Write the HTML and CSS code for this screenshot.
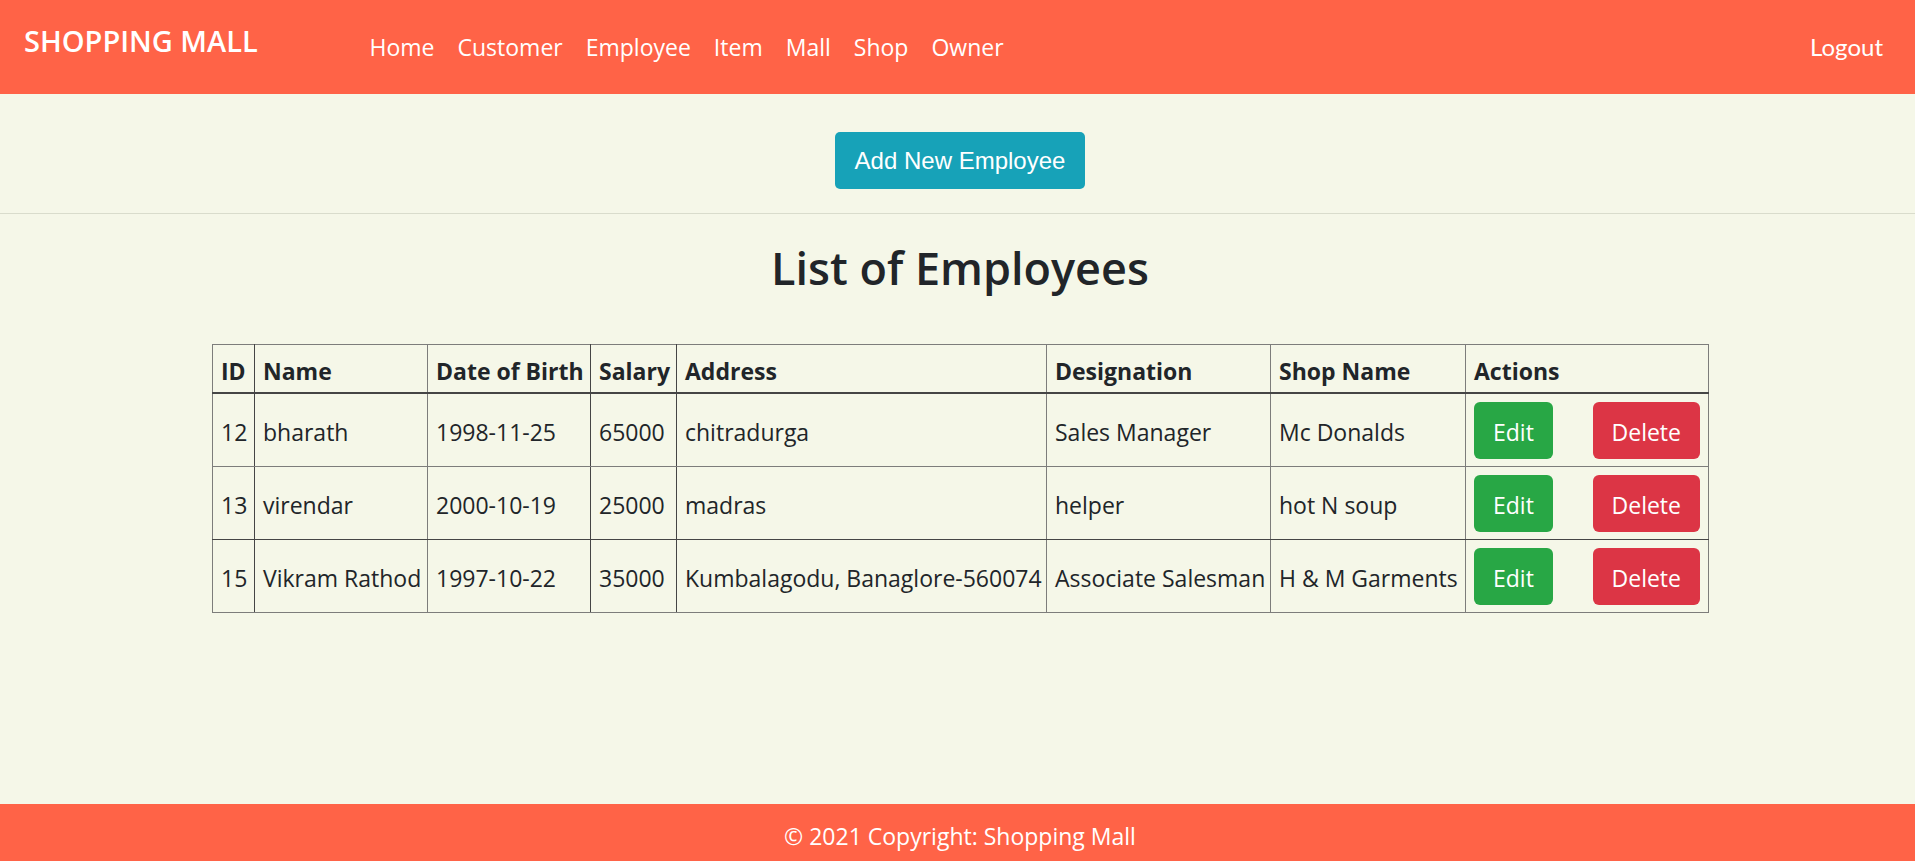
FILE: index.html
```html
<!DOCTYPE html>
<html lang="en">
<head>
<meta charset="utf-8">
<title>Shopping Mall - Employees</title>
<link rel="stylesheet" href="styles.css">
</head>
<body>
<header class="navbar">
  <a class="brand" href="#">SHOPPING MALL</a>
  <nav class="nav-links">
    <a href="#">Home</a>
    <a href="#">Customer</a>
    <a href="#">Employee</a>
    <a href="#">Item</a>
    <a href="#">Mall</a>
    <a href="#">Shop</a>
    <a href="#">Owner</a>
  </nav>
  <a class="logout" href="#">Logout</a>
</header>
<main class="content">
  <div class="toolbar">
    <button class="btn-add" type="button">Add New Employee</button>
  </div>
  <hr class="divider">
  <h2 class="page-title">List of Employees</h2>
  <table class="emp-table">
    <colgroup>
      <col class="c-id"><col class="c-name"><col class="c-dob"><col class="c-sal"><col class="c-addr"><col class="c-des"><col class="c-shop"><col class="c-act">
    </colgroup>
    <thead>
      <tr>
        <th class="dk">ID</th><th>Name</th><th class="dk">Date of Birth</th><th class="dk">Salary</th><th>Address</th><th>Designation</th><th>Shop Name</th><th>Actions</th>
      </tr>
    </thead>
    <tbody>
      <tr>
        <td class="dk">12</td><td>bharath</td><td class="dk">1998-11-25</td><td class="dk">65000</td><td>chitradurga</td><td>Sales Manager</td><td>Mc Donalds</td>
        <td><div class="actions"><button class="btn btn-edit" type="button">Edit</button><button class="btn btn-delete" type="button">Delete</button></div></td>
      </tr>
      <tr class="row-dk">
        <td class="dk">13</td><td>virendar</td><td class="dk">2000-10-19</td><td class="dk">25000</td><td>madras</td><td>helper</td><td>hot N soup</td>
        <td><div class="actions"><button class="btn btn-edit" type="button">Edit</button><button class="btn btn-delete" type="button">Delete</button></div></td>
      </tr>
      <tr>
        <td class="dk">15</td><td>Vikram Rathod</td><td class="dk">1997-10-22</td><td class="dk">35000</td><td>Kumbalagodu, Banaglore-560074</td><td>Associate Salesman</td><td>H &amp; M Garments</td>
        <td><div class="actions"><button class="btn btn-edit" type="button">Edit</button><button class="btn btn-delete" type="button">Delete</button></div></td>
      </tr>
    </tbody>
  </table>
</main>
<footer class="footer">© 2021 Copyright: Shopping Mall</footer>
</body>
</html>
```

FILE: styles.css
```css
html, body {
  margin: 0;
  padding: 0;
}

body {
  font-family: "Open Sans", "Noto Sans", sans-serif;
  background: #f5f7e8;
  color: #212529;
  min-height: 100vh;
  display: flex;
  flex-direction: column;
}

/* ---------- Navbar ---------- */
.navbar {
  height: 94px;
  box-sizing: border-box;
  background: #ff6347;
  display: flex;
  align-items: center;
  padding: 0 32px 0 24px;
}

.brand {
  flex: 0 0 334px;
  font-size: 29px;
  font-weight: 600;
  line-height: 1.5;
  color: #fff;
  text-decoration: none;
  margin-bottom: 12px;
}

.nav-links {
  display: flex;
}

.nav-links a {
  font-size: 23px;
  line-height: 1.5;
  color: #fff;
  text-decoration: none;
  padding: 0 11.5px;
}

.logout {
  margin-left: auto;
  font-family: Lato, "Open Sans", sans-serif;
  font-size: 24px;
  line-height: 1.5;
  color: #fff;
  text-decoration: none;
}

/* ---------- Main ---------- */
.content {
  flex: 1;
  padding-top: 38px;
}

.toolbar {
  display: flex;
  justify-content: center;
  padding-left: 5px;
}

.btn-add {
  font-family: "Liberation Sans", Arial, sans-serif;
  font-size: 24px;
  line-height: 36px;
  padding: 10.5px 19.5px;
  background: #17a2b8;
  color: #fff;
  border: 0;
  border-radius: 5px;
}

.divider {
  margin: 24px 0 0;
  border: 0;
  border-top: 1px solid #d9dccc;
  height: 0;
}

.page-title {
  margin: 27px 0 0;
  padding-left: 5px;
  font-size: 45px;
  font-weight: 600;
  line-height: 54px;
  text-align: center;
  color: #212529;
}

/* ---------- Table ---------- */
.emp-table {
  margin: 49px 0 0 212px;
  width: 1496px;
  table-layout: fixed;
  border-collapse: collapse;
  border: 1px solid #454545;
  font-size: 23px;
}

.c-id { width: 42px; }
.c-name { width: 173px; }
.c-dob { width: 163px; }
.c-sal { width: 86px; }
.c-addr { width: 370px; }
.c-des { width: 224px; }
.c-shop { width: 195px; }
.c-act { width: 243px; }

.emp-table th,
.emp-table td {
  border: 1px solid #7d7d7b;
  text-align: left;
  white-space: nowrap;
  vertical-align: middle;
}

.emp-table th {
  font-weight: 700;
  line-height: 34px;
  padding: 8.5px 8px 4.5px;
  border-bottom: 2px solid #454545;
}

.emp-table td {
  line-height: 34.5px;
  padding: 10px 8px 5px;
}

.emp-table .dk {
  border-right-color: #454545;
}

.emp-table .row-dk td {
  border-bottom-color: #454545;
}

.actions {
  display: flex;
  justify-content: space-between;
  margin-top: -2.5px;
  margin-bottom: 2.5px;
}

.btn {
  font-family: "Open Sans", "Noto Sans", sans-serif;
  font-size: 23px;
  line-height: 34.5px;
  padding: 13.5px 19px 9px;
  color: #fff;
  border: 0;
  border-radius: 6px;
}

.btn-edit {
  background: #28a745;
}

.btn-delete {
  background: #dc3545;
}

/* ---------- Footer ---------- */
.footer {
  height: 57px;
  box-sizing: border-box;
  background: #ff6347;
  color: #fff;
  font-size: 23px;
  line-height: 57px;
  padding: 4px 0 0 5px;
  text-align: center;
}
```
